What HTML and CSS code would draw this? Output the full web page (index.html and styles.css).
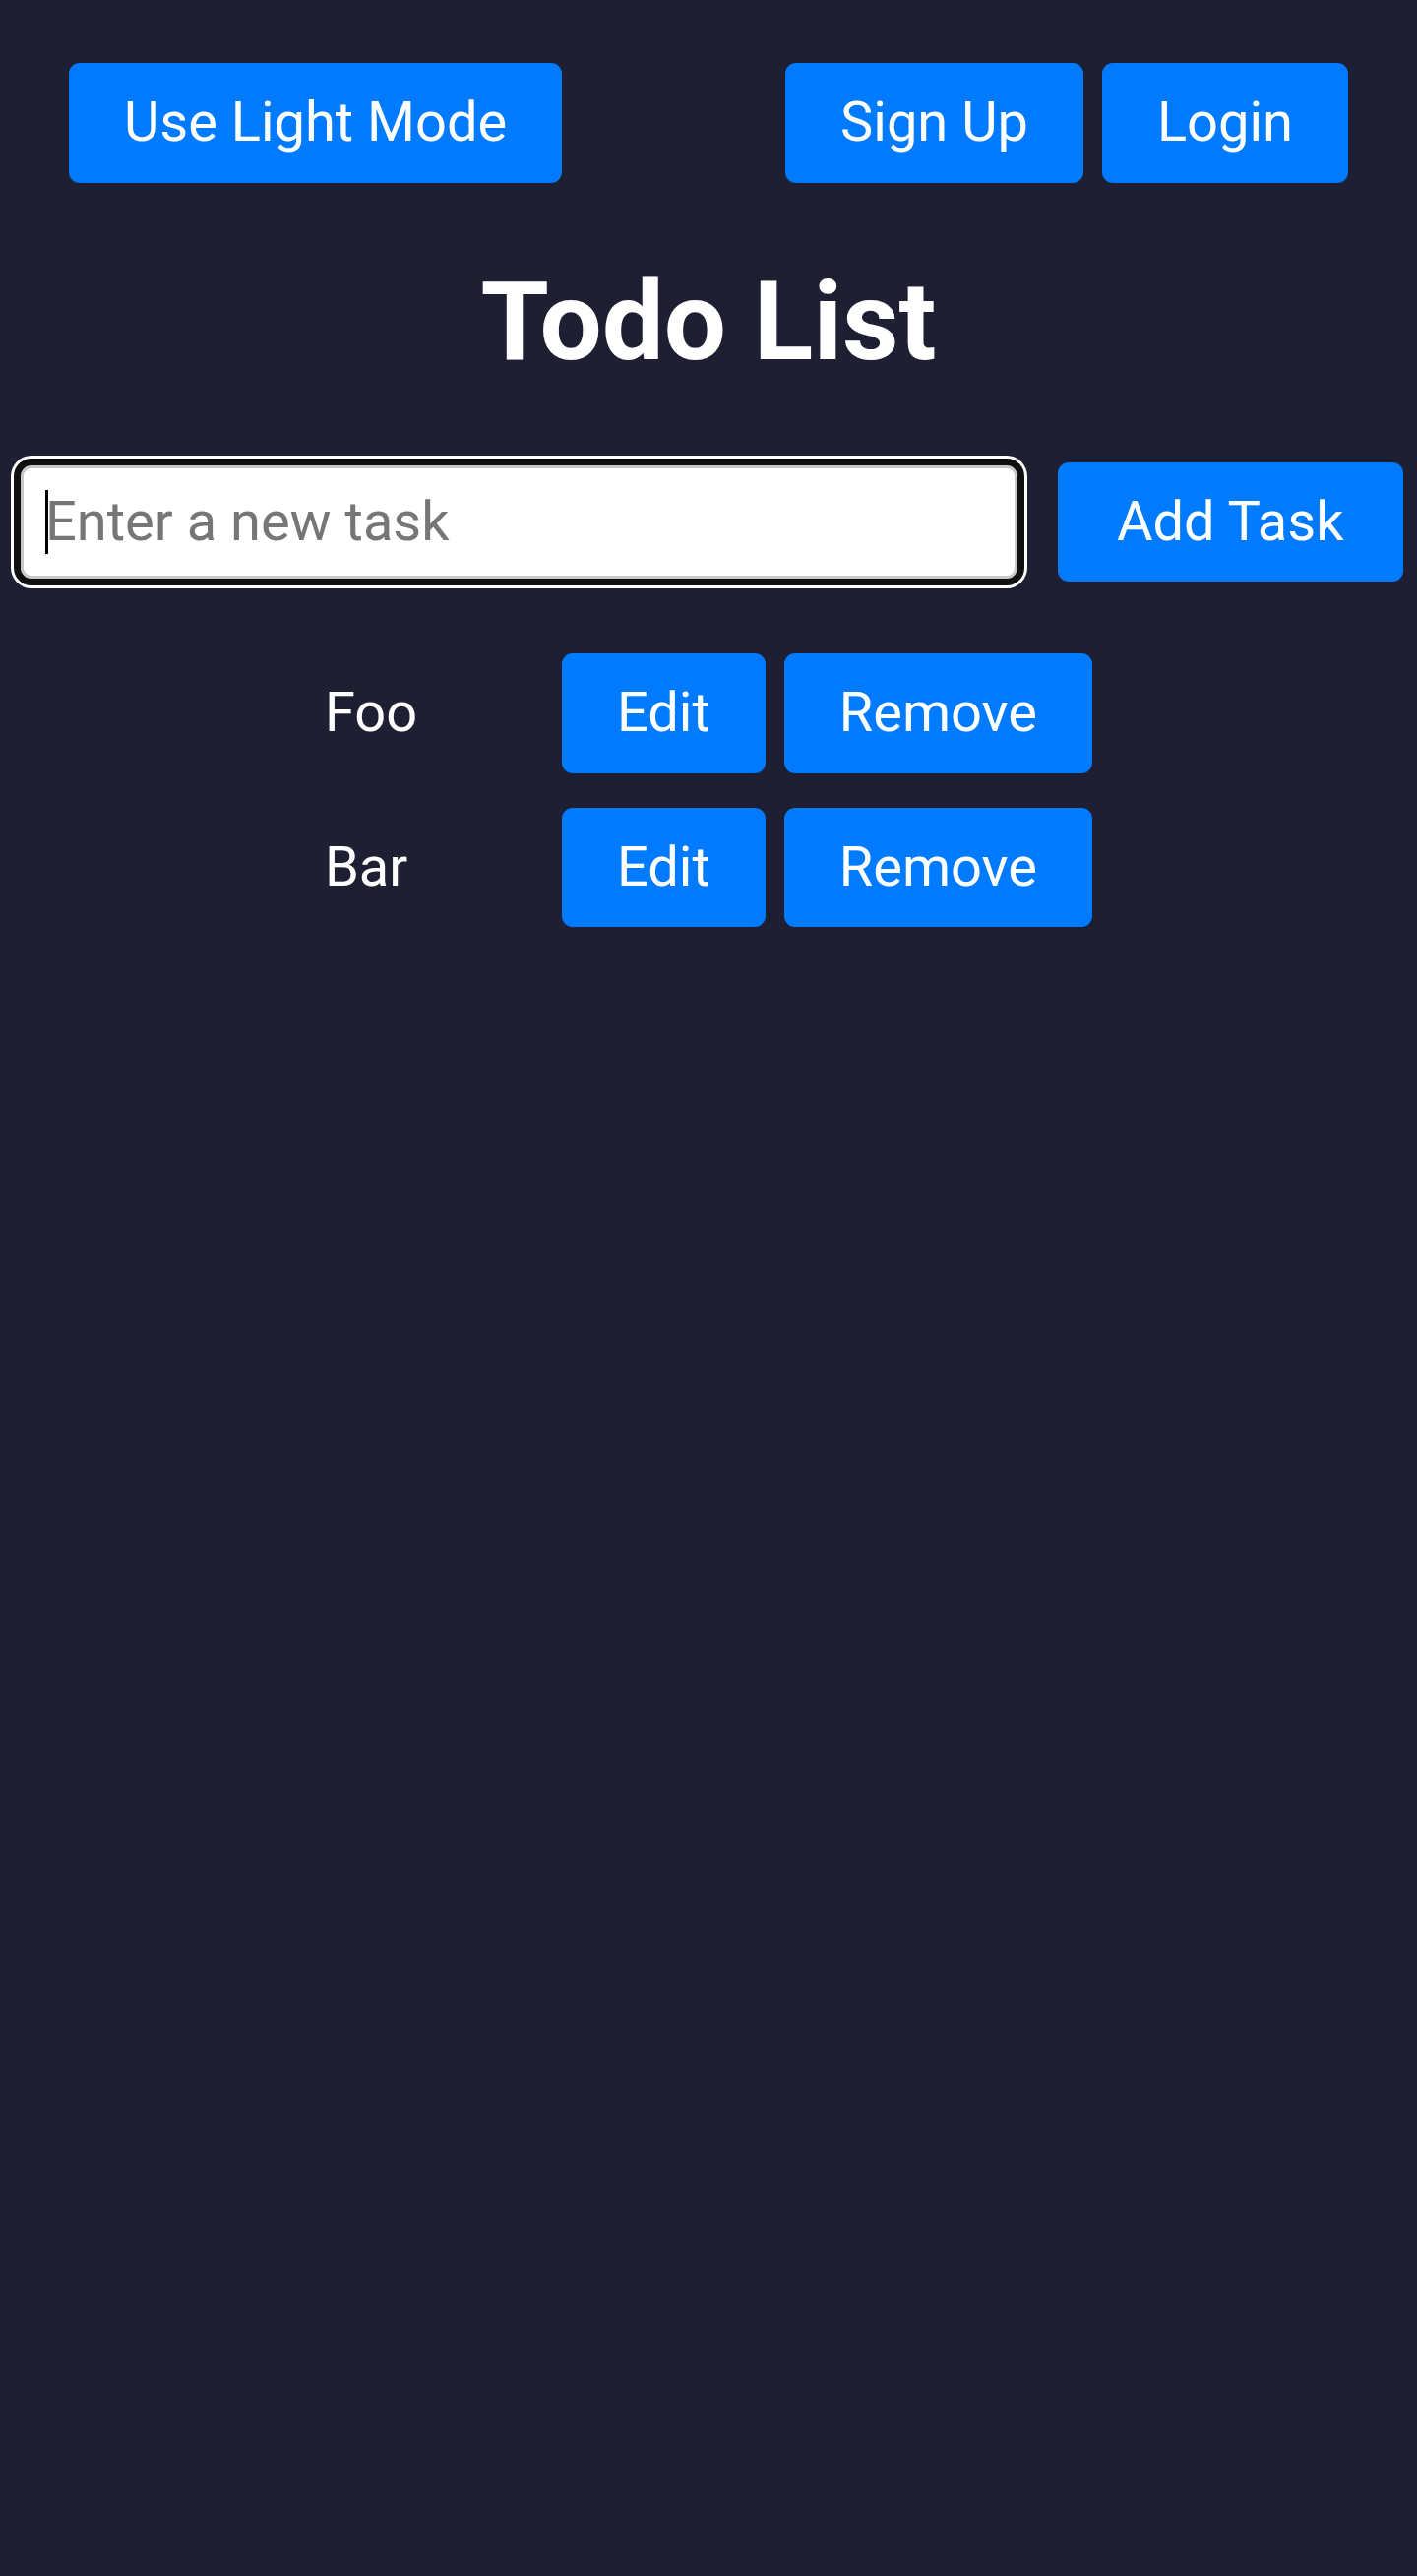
FILE: index.html
```html
<!DOCTYPE html>
<html lang="en">
<head>
<meta charset="utf-8">
<title>Todo List</title>
<link rel="stylesheet" href="styles.css">
</head>
<body>
<header class="topbar">
  <button class="btn" type="button">Use Light Mode</button>
  <div class="actions">
    <button class="btn" type="button">Sign Up</button>
    <button class="btn" type="button">Login</button>
  </div>
</header>
<h1 class="title">Todo List</h1>
<form class="task-form">
  <div class="input-wrap">
    <input class="task-input" type="text" placeholder="Enter a new task">
    <span class="caret" aria-hidden="true"></span>
  </div>
  <button class="btn btn-add" type="button">Add Task</button>
</form>
<ul class="task-list">
  <li class="task">
    <span class="task-name">Foo</span>
    <div class="actions">
      <button class="btn" type="button">Edit</button>
      <button class="btn" type="button">Remove</button>
    </div>
  </li>
  <li class="task">
    <span class="task-name">Bar</span>
    <div class="actions">
      <button class="btn" type="button">Edit</button>
      <button class="btn" type="button">Remove</button>
    </div>
  </li>
</ul>
</body>
</html>
```

FILE: styles.css
```css
html {
  background: #1f1f33;
}
body {
  margin: 0;
  min-height: 2618px;
  background: #1f1f33;
  color: #ffffff;
  font-family: Roboto, "Liberation Sans", Arial, sans-serif;
}
.topbar {
  display: flex;
  justify-content: space-between;
  align-items: flex-start;
  padding: 64px 70px 0;
}
.actions {
  display: flex;
  gap: 19px;
}
.btn {
  background: #007bff;
  color: #ffffff;
  border: none;
  border-radius: 11px;
  font-family: Roboto, "Liberation Sans", Arial, sans-serif;
  font-size: 56px;
  font-weight: 400;
  line-height: 65.6px;
  padding: 28px 56px;
  margin: 0;
  cursor: pointer;
}
.btn-add {
  padding: 28px 60px;
}
.title {
  margin: 75px 0 0;
  text-align: center;
  font-size: 112px;
  font-weight: 700;
  line-height: 131px;
}
.task-form {
  display: flex;
  align-items: center;
  gap: 41px;
  margin: 78px 0 0;
  padding-left: 21px;
}
.input-wrap {
  position: relative;
  display: flex;
}
.task-input {
  box-sizing: border-box;
  width: 1013px;
  height: 115px;
  margin: 0;
  padding: 0 22px;
  border: 3px solid #c8c8c8;
  border-radius: 11px;
  background: #ffffff;
  color: #111111;
  font-family: Roboto, "Liberation Sans", Arial, sans-serif;
  font-size: 56px;
  outline: 7px solid #101010;
  outline-offset: 0;
  box-shadow: 0 0 0 10px #ffffff;
}
.task-input:focus,
.task-input:focus-visible {
  outline: 7px solid #101010;
  outline-offset: 0;
}
.task-input::placeholder {
  color: #767676;
}
.caret {
  position: absolute;
  left: 25px;
  top: 25px;
  width: 3px;
  height: 65px;
  background: #000000;
}
.task-list {
  list-style: none;
  margin: 73px 0 0;
  padding: 0;
  display: flex;
  flex-direction: column;
  align-items: center;
  gap: 35px;
}
.task {
  display: flex;
  align-items: center;
}
.task-name {
  width: 241px;
  font-size: 56px;
  line-height: 65.6px;
}
```
